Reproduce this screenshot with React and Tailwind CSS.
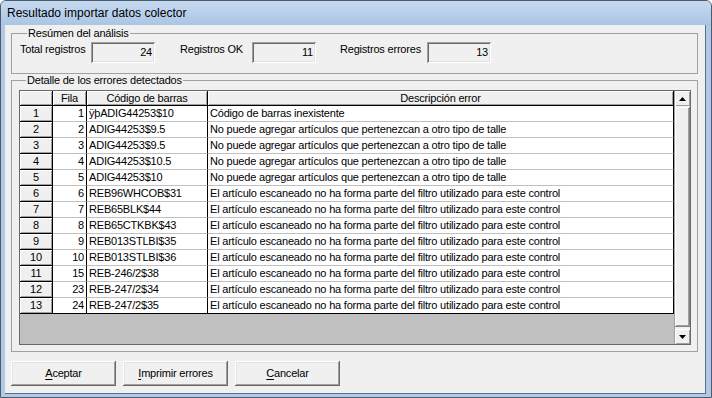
const rows = [
  [1, 1, "ÿþADIG44253$10", "Código de barras inexistente"],
  [2, 2, "ADIG44253$9.5", "No puede agregar artículos que pertenezcan a otro tipo de talle"],
  [3, 3, "ADIG44253$9.5", "No puede agregar artículos que pertenezcan a otro tipo de talle"],
  [4, 4, "ADIG44253$10.5", "No puede agregar artículos que pertenezcan a otro tipo de talle"],
  [5, 5, "ADIG44253$10", "No puede agregar artículos que pertenezcan a otro tipo de talle"],
  [6, 6, "REB96WHCOB$31", "El artículo escaneado no ha forma parte del filtro utilizado para este control"],
  [7, 7, "REB65BLK$44", "El artículo escaneado no ha forma parte del filtro utilizado para este control"],
  [8, 8, "REB65CTKBK$43", "El artículo escaneado no ha forma parte del filtro utilizado para este control"],
  [9, 9, "REB013STLBI$35", "El artículo escaneado no ha forma parte del filtro utilizado para este control"],
  [10, 10, "REB013STLBI$36", "El artículo escaneado no ha forma parte del filtro utilizado para este control"],
  [11, 15, "REB-246/2$38", "El artículo escaneado no ha forma parte del filtro utilizado para este control"],
  [12, 23, "REB-247/2$34", "El artículo escaneado no ha forma parte del filtro utilizado para este control"],
  [13, 24, "REB-247/2$35", "El artículo escaneado no ha forma parte del filtro utilizado para este control"],
];

const raised =
  "bg-[#f0f0f0] shadow-[inset_1px_1px_#ffffff,inset_-1px_-1px_#a0a0a0]";

const ReadBox = ({ value }) => (
  <div className="w-[64px] h-[21px] mt-[2px] bg-[#f0f0f0] flex items-center justify-end pr-[3px] shadow-[inset_1px_1px_#a0a0a0,inset_-1px_-1px_#ffffff,inset_2px_2px_#696969,inset_-2px_-2px_#e3e3e3]">
    {value}
  </div>
);

const Arrow = ({ down }) => (
  <svg width="7" height="4" viewBox="0 0 7 4">
    {down ? <polygon points="0,0 7,0 3.5,4" fill="#000" /> : <polygon points="0,4 7,4 3.5,0" fill="#000" />}
  </svg>
);

const WinButton = ({ hot, rest }) => (
  <button className="w-[105px] h-[25px] bg-[#f0f0f0] flex items-center justify-center shadow-[inset_-1px_-1px_#696969,inset_1px_1px_#ffffff,inset_-2px_-2px_#a0a0a0,inset_2px_2px_#e3e3e3]">
    <span>
      <span className="underline underline-offset-[2px]">{hot}</span>
      {rest}
    </span>
  </button>
);

export default function App() {
  return (
    <div className="w-[712px] h-[398px] flex flex-col bg-[#b0c9e6] border border-[#4d5b6b] rounded-t-[6px] overflow-hidden font-['Liberation_Sans',Arial,sans-serif] text-[11px] tracking-[-0.2px] text-black">
      {/* Title bar */}
      <div className="h-[24px] shrink-0 flex items-center pl-[6px] bg-gradient-to-b from-[#c6daf0] to-[#abc5e4] text-[12px] tracking-normal">
        Resultado importar datos colector
      </div>

      {/* Client area */}
      <div className="flex-1 ml-[4px] mr-[5px] mb-[3px] bg-[#f0f0f0] border-r border-b border-[#5d6f86] flex flex-col pl-[6px]">
        {/* Resumen */}
        <fieldset className="w-[687px] h-[47px] mt-[2px] border border-[#a0a0a0] pl-[8px]">
          <legend className="ml-[7px] px-[1px] leading-[13px]">Resúmen del análisis</legend>
          <div className="flex items-start">
            <span className="w-[71px] mt-[3px] leading-[13px]">Total registros</span>
            <ReadBox value="24" />
            <span className="w-[72px] ml-[25px] mt-[3px] leading-[13px]">Registros OK</span>
            <ReadBox value="11" />
            <span className="w-[87px] ml-[24px] mt-[3px] leading-[13px]">Registros errores</span>
            <ReadBox value="13" />
          </div>
        </fieldset>

        {/* Detalle */}
        <fieldset className="w-[687px] h-[278px] border border-[#a0a0a0] pl-[7px]">
          <legend className="ml-[7px] px-[1px] leading-[12px]">Detalle de los errores detectados</legend>
          <div className="mt-[4px] w-[672px] h-[255px] flex border border-[#696969]">
            <div className="w-[654px] flex flex-col bg-[#c0c0c0]">
              {/* header */}
              <div className="flex h-[15px] shrink-0">
                <div className={`w-[33px] border-r border-b border-black ${raised}`} />
                <div className={`w-[34px] border-r border-b border-black flex items-center justify-center ${raised}`}>Fila</div>
                <div className={`w-[121px] border-r border-b border-black flex items-center justify-center ${raised}`}>Código de barras</div>
                <div className={`w-[466px] border-r border-b border-black flex items-center justify-center ${raised}`}>Descripción error</div>
              </div>
              {rows.map(([n, fila, code, desc], i) => (
                <div key={n} className="flex h-[16px] shrink-0">
                  <div className={`w-[33px] border-r border-b border-black flex items-center justify-center ${raised}`}>{n}</div>
                  <div className={`w-[34px] bg-white border-r border-black border-b flex items-center justify-end pr-[2px] ${i === rows.length - 1 ? "border-b-black" : "border-b-[#c0c0c0]"}`}>{fila}</div>
                  <div className={`w-[121px] bg-white border-r border-black border-b flex items-center pl-[2px] whitespace-nowrap ${i === rows.length - 1 ? "border-b-black" : "border-b-[#c0c0c0]"}`}>{code}</div>
                  <div className={`w-[466px] bg-white border-r border-black border-b flex items-center pl-[2px] whitespace-nowrap ${i === rows.length - 1 ? "border-b-black" : "border-b-[#c0c0c0]"}`}>{desc}</div>
                </div>
              ))}
            </div>
            {/* scrollbar */}
            <div className="w-[16px] flex flex-col bg-[#f0f0f0] border-l border-[#a0a0a0]">
              <div className={`h-[15px] shrink-0 flex items-center justify-center ${raised}`}>
                <Arrow />
              </div>
              <div className={`flex-1 mt-[1px] mb-[2px] ${raised} border-r border-b border-[#808080]`} />
              <div className={`h-[15px] shrink-0 flex items-center justify-center ${raised}`}>
                <Arrow down />
              </div>
            </div>
          </div>
        </fieldset>

        {/* Buttons */}
        <div className="flex gap-[7px] mt-[9px] w-[687px]">
          <WinButton hot="A" rest="ceptar" />
          <WinButton hot="I" rest="mprimir errores" />
          <WinButton hot="C" rest="ancelar" />
        </div>
      </div>
    </div>
  );
}
